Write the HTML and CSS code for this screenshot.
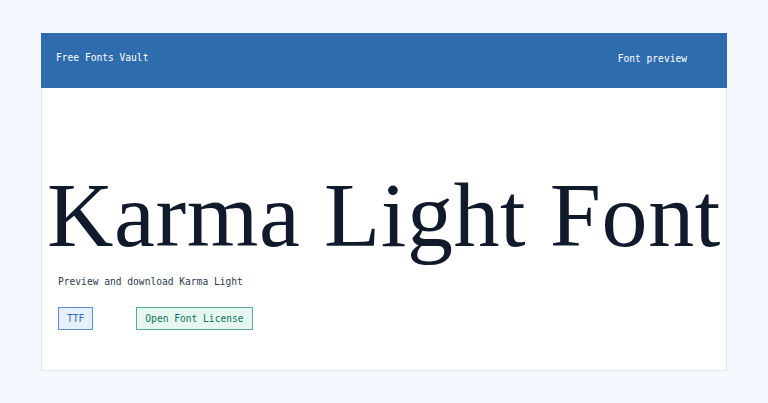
FILE: index.html
```html
<!DOCTYPE html>
<html lang="en">
  <head>
    <meta charset="UTF-8" />
    <meta name="viewport" content="width=device-width, initial-scale=1.0" />
    <title>Karma Light Font - Free Fonts Vault</title>
    <link rel="stylesheet" href="styles.css">
  </head>
  <body>
    <div class="card">
      <header class="topbar">
        <div class="brand">Free Fonts Vault</div>
        <nav class="nav">Font preview</nav>
      </header>
      <main class="content">
        <h1 class="specimen">Karma Light Font</h1>
        <p class="lead">Preview and download Karma Light</p>
        <div class="tags">
          <span class="tag tag-format">TTF</span>
          <span class="tag tag-license">Open Font License</span>
        </div>
      </main>
    </div>
  </body>
</html>
```

FILE: styles.css
```css
body {
  margin: 0;
  background-color: #f5f9ff;
  font-family: "DejaVu Sans Mono", monospace;
  font-size: 9.6px;
}
.card {
  width: 686px;
  margin: 33px 0 0 41px;
  background-color: #fff;
  border: 1px solid #e3e9f2;
  border-top: none;
  box-sizing: border-box;
  height: 338px;
}
.topbar {
  display: flex;
  justify-content: space-between;
  align-items: center;
  height: 55px;
  padding: 0 40px 0 15px;
  margin: 0 -1px;
  background-color: #2f6cad;
  color: #fff;
}
.brand {
  margin-top: -7px;
}
.nav {
  margin-top: -5px;
}
.content {
  padding: 0 16px;
}
/* big specimen line, kept on one line across the card */
.specimen {
  margin: 77px -16px 0;
  text-align: center;
  white-space: nowrap;
  font-family: "Liberation Serif", serif;
  font-weight: normal;
  font-size: 92px;
  letter-spacing: 0.6px;
  line-height: 100px;
  color: #111a2b;
}
.lead {
  margin: 11px 0 0;
  line-height: 12px;
  color: #2d3a4f;
}
.tags {
  display: flex;
  gap: 43px;
  margin-top: 19px;
}
.tag {
  padding: 5px 8px;
  line-height: 11px;
  border: 1px solid;
}
.tag-format {
  background-color: #e6f0fd;
  border-color: #5c90d2;
  color: #2f6cad;
}
.tag-license {
  background-color: #e6f7f1;
  border-color: #5aa89a;
  color: #0f6f62;
}
```
